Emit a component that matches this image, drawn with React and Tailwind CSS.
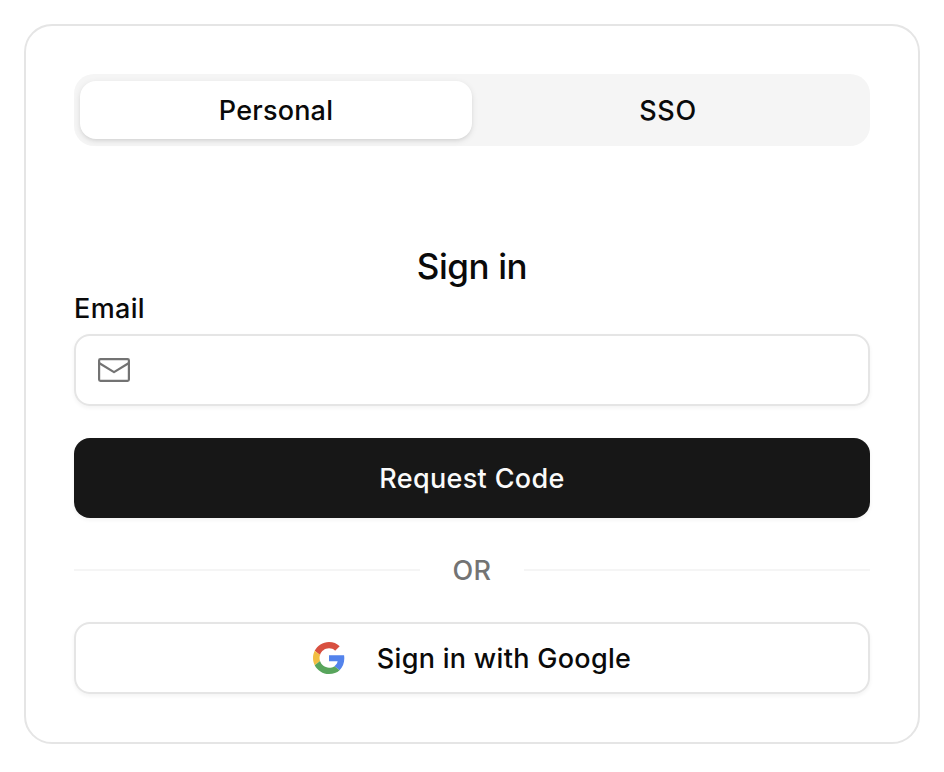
function MailIcon() {
  return (
    <svg width="32" height="24" viewBox="0 0 32 24" fill="none" stroke="#737373" strokeWidth="2.2" strokeLinecap="round" strokeLinejoin="round">
      <rect x="1.1" y="1.1" width="29.8" height="21.8" rx="1.3" />
      <path d="M1.5 5.2L16 14.1L30.5 5.2" />
    </svg>
  )
}

function GoogleIcon() {
  return (
    <svg width="32" height="32" viewBox="0 0 48 48">
      <path fill="#D85040" d="M24 9.5c3.54 0 6.71 1.22 9.21 3.6l6.85-6.85C35.9 2.38 30.47 0 24 0 14.62 0 6.51 5.38 2.56 13.22l7.98 6.19C12.43 13.72 17.74 9.5 24 9.5z" />
      <path fill="#5383EC" d="M46.98 24.55c0-1.57-.15-3.09-.38-4.55H24v9.02h12.94c-.58 2.96-2.26 5.48-4.78 7.18l7.73 6c4.51-4.18 7.09-10.36 7.09-17.65z" />
      <path fill="#F2BE42" d="M10.53 28.59c-.48-1.45-.76-2.99-.76-4.59s.27-3.14.76-4.59l-7.98-6.19C.92 16.46 0 20.12 0 24c0 3.88.92 7.54 2.56 10.78l7.97-6.19z" />
      <path fill="#58A55C" d="M24 48c6.48 0 11.93-2.13 15.89-5.81l-7.73-6c-2.15 1.45-4.92 2.3-8.16 2.3-6.26 0-11.57-4.22-13.47-9.91l-7.98 6.19C6.51 42.62 14.62 48 24 48z" />
    </svg>
  )
}

export default function App() {
  return (
    <div className="h-[772px] bg-white px-6 pt-6 font-['Inter',sans-serif] text-[27px] leading-[40px] font-medium text-neutral-950">
      <div className="h-[720px] rounded-[28px] border-2 border-neutral-200 px-12 pt-12">
        <div className="flex h-[72px] rounded-[20px] bg-neutral-100 p-1.5">
          <button className="mt-px h-[58px] flex-1 rounded-2xl bg-white pt-0.5 tracking-[0.2px] shadow-[0_2px_6px_rgba(0,0,0,0.1),0_2px_4px_-2px_rgba(0,0,0,0.1)]">Personal</button>
          <button className="mt-px h-[58px] flex-1 pt-0.5 tracking-[0.6px]">SSO</button>
        </div>

        <h1 className="mt-[100px] text-center text-[35px] leading-[40px] tracking-[-0.4px]">Sign in</h1>
        <label className="mt-2 block pt-px leading-[28px] tracking-[0.35px]">Email</label>
        <div className="mt-[11px] flex h-[72px] items-center rounded-2xl border-2 border-neutral-200 px-[22px] shadow-[0_2px_4px_rgba(0,0,0,0.05)]">
          <MailIcon />
        </div>

        <button className="mt-8 block h-20 w-full rounded-2xl bg-neutral-900 pt-0.5 tracking-[0.34px] text-neutral-50 shadow-[0_2px_4px_rgba(0,0,0,0.05)]">Request Code</button>

        <div className="mt-8 flex h-10 items-center text-neutral-500">
          <div className="h-0.5 flex-1 bg-neutral-100" />
          <span className="w-[104px] pt-0.5 text-center tracking-[0.5px]">OR</span>
          <div className="h-0.5 flex-1 bg-neutral-100" />
        </div>

        <button className="mt-8 flex h-[72px] w-full items-center justify-center gap-8 rounded-2xl border-2 border-neutral-200 tracking-[0.3px] shadow-[0_2px_4px_rgba(0,0,0,0.05)]">
          <GoogleIcon />
          <span className="pt-0.5">Sign in with Google</span>
        </button>
      </div>
    </div>
  )
}
